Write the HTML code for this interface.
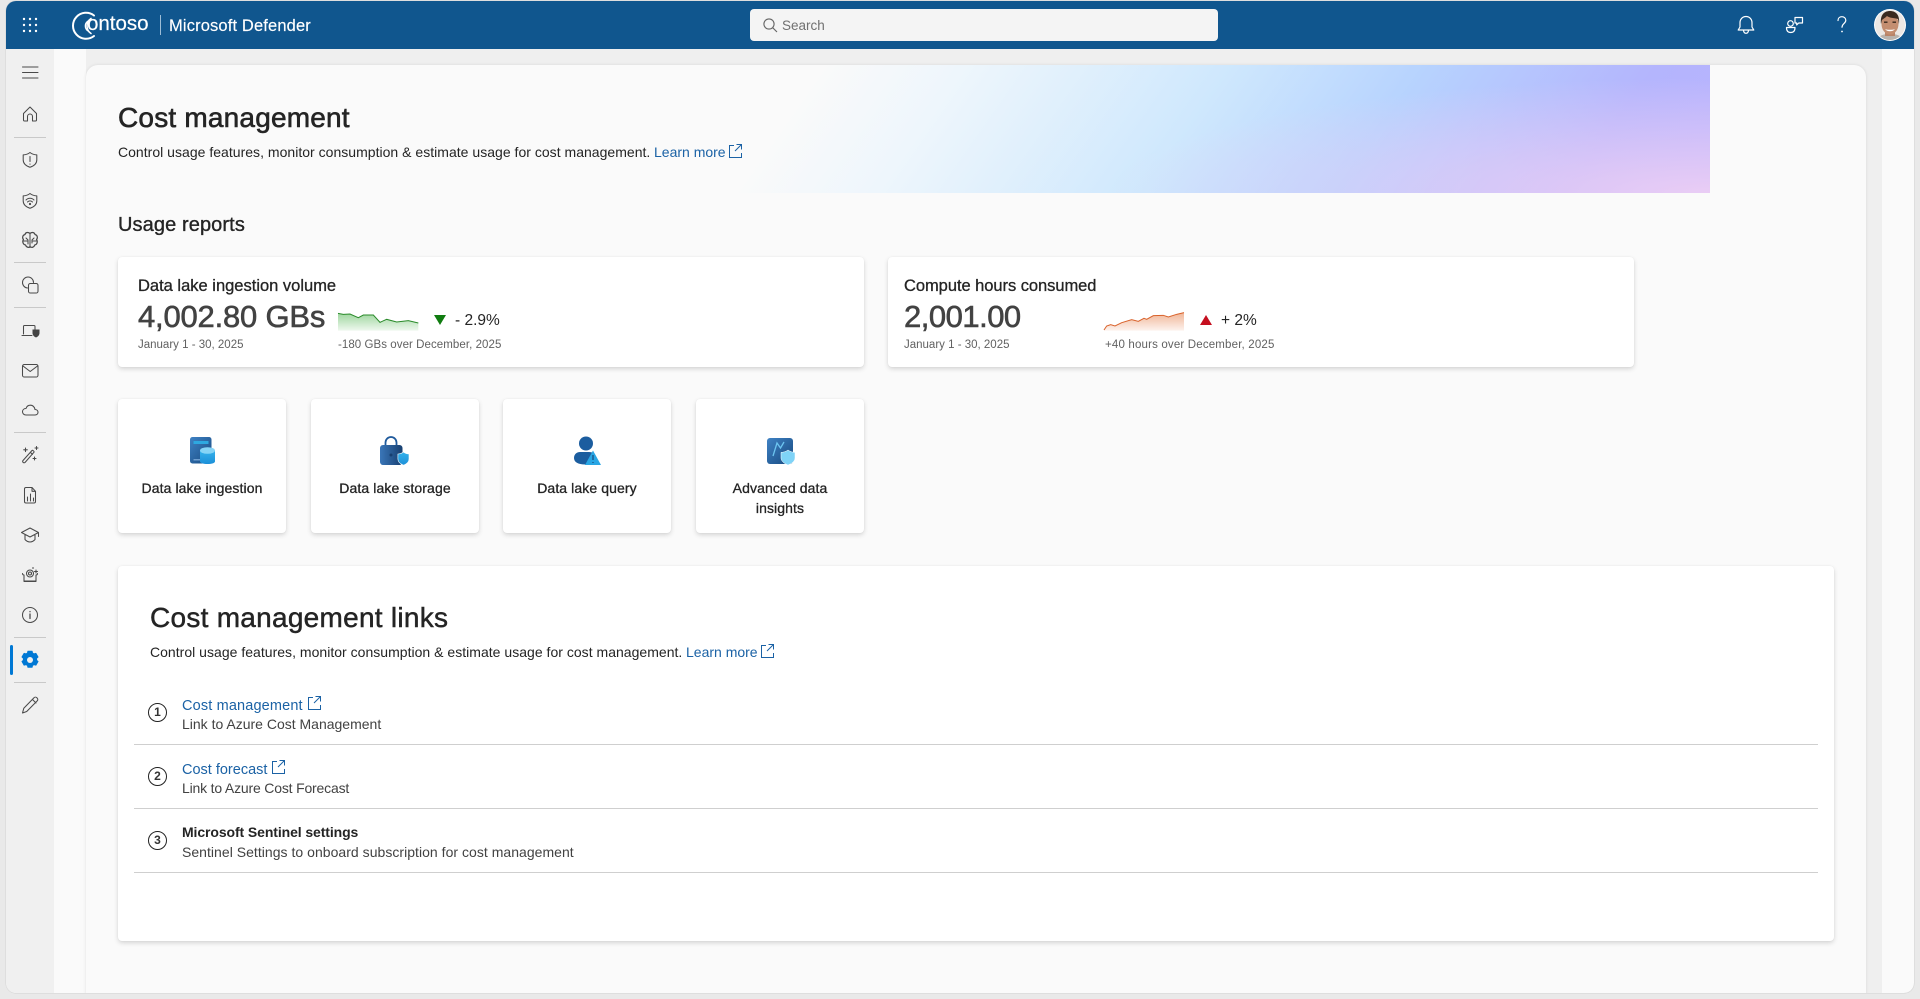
<!DOCTYPE html>
<html lang="en"><head><meta charset="utf-8"><title>Cost management</title>
<style>
html,body{margin:0;padding:0;width:1920px;height:999px;overflow:hidden;background:#e9e9e9;font-family:"Liberation Sans",Arial,sans-serif;color:#242424}
.a{position:absolute}
.t{position:absolute;white-space:nowrap;line-height:20px;font-size:14px}
.m{-webkit-text-stroke:.25px currentColor}
.card{position:absolute;background:#fff;border-radius:4px;box-shadow:0 2px 5px rgba(0,0,0,.15),0 0 1px rgba(0,0,0,.08)}
.link{color:#1b62a5}
.g{color:#616161}
.div{position:absolute;left:134px;width:1684px;height:1px;background:#cfcfcf}
.n{position:absolute;left:148px;width:17px;height:17px;border:1.6px solid #222;border-radius:50%;text-align:center;font-size:12px;line-height:17px;font-weight:bold;color:#333}
svg{position:absolute;overflow:visible}
</style></head><body>
<div class="a" style="left:6px;top:1px;width:1908px;height:992px;background:#fafafa;border-radius:10px;overflow:hidden;box-shadow:0 0 1px rgba(0,0,0,.3)">
<div class="a" style="left:0;top:48px;width:48px;height:944px;background:#f0f0f0"></div>
<div class="a" style="left:80px;top:48px;width:1796px;height:944px;background:#efefef"></div>
<div class="a" style="left:80px;top:64px;width:1780px;height:930px;background:#fafafa;border-radius:12px 12px 0 0;box-shadow:0 0 3px rgba(0,0,0,.1)"></div>
<div class="a" style="left:0;top:0;width:1908px;height:48px;background:#10568e"></div>
</div>

<!-- banner -->
<div class="a" style="left:700px;top:65px;width:1010px;height:128px;background:radial-gradient(ellipse 600px 115px at 100% 100%,rgba(236,206,244,.95) 0,rgba(226,204,250,0) 100%),linear-gradient(125deg,#fafafa 0,#fafafa 11%,#eef6fc 24%,#cfe8fd 48%,#b7d3fe 66%,#b4b5fd 87%,#b8b2fe 100%)"></div>

<!-- header -->
<svg style="left:0;top:0" width="1920" height="50" viewBox="0 0 1920 50">
<g fill="#fff"><circle cx="24" cy="19" r="1.2"/><circle cx="30" cy="19" r="1.2"/><circle cx="36" cy="19" r="1.2"/><circle cx="24" cy="25" r="1.2"/><circle cx="30" cy="25" r="1.2"/><circle cx="36" cy="25" r="1.2"/><circle cx="24" cy="31" r="1.2"/><circle cx="30" cy="31" r="1.2"/><circle cx="36" cy="31" r="1.2"/></g>
<g fill="none" stroke="#fff" stroke-linecap="round"><path d="M94 15.500A13 13 0 1 0 94 36" stroke-width="2"/><path d="M91 18.500A9 9 0 0 0 91 33.500" stroke-width="1.600"/><path d="M88 21A6 6 0 0 0 88 31" stroke-width="1.300"/></g>
<rect x="160" y="15" width="1" height="20" fill="#9dbdd6"/>
<g fill="none" stroke="#fff" stroke-width="1.200" stroke-linecap="round" stroke-linejoin="round">
<path d="M1746 16.500c3.500 0 6 2.800 6 6.200v4.300l1.800 3h-15.600l1.800-3v-4.300c0-3.400 2.500-6.200 6-6.200zM1743.500 30.500c.3 2 1.200 2.800 2.500 2.800s2.200-.8 2.500-2.800"/>
<circle cx="1790.500" cy="23.500" r="2.800"/><path d="M1786.500 27.500h8.500c0 3.800-2 5-4.300 5s-4.200-1.200-4.200-5z"/><path d="M1795 17.500h7.500v5.500h-3.800l-2 2v-2h-1.700z"/>
<path d="M1838 20.500c0-2.500 1.800-3.800 3.900-3.800s3.900 1.400 3.900 3.500c0 3.400-3.800 3.400-3.800 7"/>
</g>
<circle cx="1842" cy="31.500" r=".9" fill="#fff"/>
<circle cx="1890" cy="25" r="16" fill="#fff"/>
<clipPath id="av"><circle cx="1890" cy="25" r="15"/></clipPath>
<g clip-path="url(#av)"><rect x="1875" y="10" width="30" height="30" fill="#ece8e4"/><path d="M1877 41c1-6 7-7 13-7s12 1 13 7z" fill="#b9b3ad"/><rect x="1885" y="27" width="10" height="9" fill="#b98468"/><ellipse cx="1890" cy="24" rx="8.500" ry="10.500" fill="#c48e70"/><path d="M1881 24c-1-9 3-13 9-13s10 4 9 13l-1-5c-3-1-9-1-11-3-2 2-4 3-5 4z" fill="#3a2a1f"/><path d="M1885 29c2 3 8 3 10 0-2 1-8 1-10 0z" fill="#fff"/><rect x="1884" y="21.500" width="3.500" height="1.400" fill="#3a2a1f"/><rect x="1892.500" y="21.500" width="3.500" height="1.400" fill="#3a2a1f"/></g>
</svg>
<div class="t" style="left:87px;top:12px;font-size:20.5px;line-height:24px;color:#fff;-webkit-text-stroke:.2px #fff">ontoso</div>
<div class="t m" style="left:169px;top:16px;font-size:16.5px;letter-spacing:.14px;color:#fff;-webkit-text-stroke:.15px #fff">Microsoft Defender</div>
<div class="a" style="left:750px;top:9px;width:468px;height:32px;background:#f4f4f4;border-radius:4px"></div>
<svg style="left:762px;top:17px" width="16" height="16" viewBox="0 0 16 16"><circle cx="7" cy="7" r="5.100" fill="none" stroke="#666" stroke-width="1.100"/><path d="M10.800 10.800L15 15" stroke="#666" stroke-width="1.100"/></svg>
<div class="t" style="left:782px;top:16px;font-size:13.5px;color:#707070">Search</div>

<!-- rail -->
<svg style="left:0;top:0" width="60" height="999" viewBox="0 0 60 999">
<g fill="#c9c9c9"><rect x="14" y="137" width="32" height="1"/><rect x="14" y="262" width="32" height="1"/><rect x="14" y="307" width="32" height="1"/><rect x="14" y="432" width="32" height="1"/><rect x="14" y="637" width="32" height="1"/><rect x="14" y="682" width="32" height="1"/></g>
<g fill="none" stroke="#4a4a4a" stroke-width="1.050" stroke-linecap="round" stroke-linejoin="round">
<path d="M22.500 67h15.500M22.500 72.500h15.500M22.500 78h15.500"/>
<path d="M23.500 113.500l6.500-6.500 6.500 6.500v6.500a1 1 0 0 1-1 1h-3v-4.500a2.500 2.500 0 0 0-5 0v4.500h-3a1 1 0 0 1-1-1z"/>
<path d="M30 152.500c2 1.600 4.400 2.300 6.800 2.400v5c0 3.500-2.600 6-6.800 7.400-4.200-1.400-6.800-3.900-6.800-7.400v-5c2.400-.1 4.800-.8 6.800-2.400z"/><path d="M30 156.500v5M30 164v.2"/>
<path d="M30 193.500c2 1.600 4.400 2.300 6.800 2.400v5c0 3.500-2.600 6-6.800 7.400-4.200-1.400-6.800-3.900-6.800-7.400v-5c2.400-.1 4.800-.8 6.800-2.400z"/><path d="M26 200a5.500 5.500 0 0 1 8 0M27.500 202a3.300 3.300 0 0 1 5 0"/><circle cx="30" cy="204" r=".6"/>
<path d="M30 233.500c-1.500-1.500-4.500-1.500-5 1-2.500.5-3 3.500-1.500 5-1.500 2-.5 5 2 5.500 1 2.500 3.500 3 4.500 1.500 1.500 1.500 4 1 4.700-1.500 2.500-.5 3.300-3.500 1.800-5.500 1.500-1.500 1-4.500-1.500-5-.7-2.500-3.500-2.500-5-1z" stroke-width="1.200"/><path d="M30 233.500v14M26 238l2 2v4M34 238l-2 2v3M24 241h4M36 241h-4"/>
<path d="M33.500 282.500a5.500 5.500 0 1 0-6 5.500"/><rect x="28.500" y="283.500" width="9.500" height="9.500" rx="1.800"/>
<path d="M35 332v-5.500a1 1 0 0 0-1-1H24.500a1 1 0 0 0-1 1v7.500M22 335.500h10"/>
<rect x="22.500" y="364.500" width="15.500" height="12.500" rx="1.800"/><path d="M23 366l7.200 5.500 7.300-5.500"/>
<path d="M26 415h9c2 0 3-1.300 3-2.700 0-1.600-1.300-2.800-3-2.800-.4-2.800-2.500-4.300-4.500-4.300-2.300 0-3.900 1.400-4.500 3.300-2.400 0-3.500 1.700-3.500 3.300 0 1.500 1.300 3.200 3.500 3.200z"/>
<path d="M23 460.500l9-10c.6-.6 2.500 1 2 1.700l-9 10.300c-.6.500-1.600.3-2-.2s-.4-1.300 0-1.800zM30.500 452.500l2 1.800"/><path d="M25.500 448v3.600M23.700 449.800h3.600M36.500 446.500v3M35 448h3M34.500 457v3M33 458.500h3"/>
<path d="M24.500 489a1.500 1.500 0 0 1 1.500-1.500h6l3.500 3.800V501.500a1.500 1.500 0 0 1-1.500 1.500h-8a1.500 1.500 0 0 1-1.500-1.500zM32 487.500v3.800h3.500M27.500 501v-4M30.500 501v-7M33.500 501v-3"/>
<path d="M21.500 532.500l8.500-4.500 8.500 4.500-8.500 4.500zM25 535v4.500c1.500 1.700 3 2.500 5 2.500s3.500-.8 5-2.500V535M38.500 532.500v4"/>
<path d="M22.500 573.500c0 1 .8 1.500 1.500 1.500v6h12v-6c.7 0 1.500-.5 1.500-1.500M24 581.500h12M36 570v3M34.500 571.500h3"/><circle cx="30" cy="573.500" r="3.500"/><circle cx="30" cy="573.500" r="1.500"/><circle cx="33" cy="568" r=".3"/>
<circle cx="30" cy="615" r="7.500"/><path d="M30 614v4.500M30 611.500v.2" stroke-width="1.300"/>
<path d="M22.500 713l1.300-4.800 10.200-10.500c.8-.8 2-.8 2.800 0l.4.400c.8.800.8 2 0 2.800L26.700 711.500zM32.500 699.500l3.500 3.500"/>
</g>
<path d="M32.500 329.500h7v3.500c0 2-1.500 3.700-3.500 4.500-2-.8-3.500-2.500-3.500-4.500z" fill="#444"/>
<rect x="10" y="645" width="3" height="30" rx="1.500" fill="#0078d4"/>
<path d="M27.500 653l.4-1.800h4.200l.4 1.800 1.600.9 1.800-.5 2.100 3.600-1.400 1.300v1.900l1.400 1.300-2.100 3.600-1.800-.5-1.600.9-.4 1.800h-4.200l-.4-1.800-1.600-.9-1.800.5-2.100-3.600 1.400-1.300v-1.900l-1.400-1.300 2.100-3.600 1.800.5z" fill="#0078d4" stroke="#0078d4" stroke-width="1" stroke-linejoin="round"/><circle cx="30" cy="660" r="3" fill="#f0f0f0"/>
</svg>

<!-- page head -->
<div class="t m" style="left:118px;top:101px;font-size:28px;line-height:34px;letter-spacing:.2px;-webkit-text-stroke:.6px #242424">Cost management</div>
<div class="t" style="left:118px;top:142px;letter-spacing:.02px">Control usage features, monitor consumption &amp; estimate usage for cost management.</div>
<div class="t link" style="left:654px;top:142px">Learn more</div>
<svg style="left:729px;top:144px" width="13" height="14" viewBox="0 0 13 14" fill="none" stroke="#1b62a5" stroke-width="1"><path d="M5 1.500H.5v12h12V9M7.500.5h5v5M12.500.5L6 7"/></svg>
<div class="t m" style="left:118px;top:213px;font-size:20px;line-height:24px;letter-spacing:.1px;-webkit-text-stroke:.35px #242424">Usage reports</div>

<!-- KPI cards -->
<div class="card" style="left:118px;top:257px;width:746px;height:110px"></div>
<div class="card" style="left:888px;top:257px;width:746px;height:110px"></div>
<div class="t m" style="left:138px;top:276px;font-size:16.5px;-webkit-text-stroke:.3px #242424">Data lake ingestion volume</div>
<div class="t m" style="left:138px;top:299px;font-size:31px;line-height:36px;letter-spacing:-.2px;color:#424242;-webkit-text-stroke:.6px #424242">4,002.80 GBs</div>
<div class="t g" style="left:138px;top:337px;font-size:11.5px;line-height:16px">January 1 - 30, 2025</div>
<div class="t" style="left:455px;top:311px;font-size:15.5px">- 2.9%</div>
<div class="t g" style="left:338px;top:337px;font-size:11.5px;line-height:16px;letter-spacing:.06px">-180 GBs over December, 2025</div>
<svg style="left:110px;top:250px" width="420" height="130" viewBox="0 0 1260 390">
<defs><linearGradient id="gf" x1="0" y1="0" x2="0" y2="1"><stop offset="0" stop-color="#9ed69e"/><stop offset="1" stop-color="#eef8ee"/></linearGradient>
<linearGradient id="of" x1="0" y1="0" x2="0" y2="1"><stop offset="0" stop-color="#f0b596"/><stop offset="1" stop-color="#fdf3ee"/></linearGradient></defs>
<path d="M684 190L700 193 720 192 745 203 760 195 790 195 810 217 830 208 860 216 895 212 925 219V242H684Z" fill="url(#gf)"/>
<path d="M684 190L700 193 720 192 745 203 760 195 790 195 810 217 830 208 860 216 895 212 925 219" fill="none" stroke="#2a8a2a" stroke-width="3"/>
<path d="M972 195H1008L990 225Z" fill="#107c10"/>
</svg>
<div class="t m" style="left:904px;top:276px;font-size:16.5px;letter-spacing:-.05px;-webkit-text-stroke:.3px #242424">Compute hours consumed</div>
<div class="t m" style="left:904px;top:299px;font-size:31px;line-height:36px;letter-spacing:-.5px;color:#424242;-webkit-text-stroke:.6px #424242">2,001.00</div>
<div class="t g" style="left:904px;top:337px;font-size:11.5px;line-height:16px">January 1 - 30, 2025</div>
<div class="t" style="left:1221px;top:311px;font-size:15.5px">+ 2%</div>
<div class="t g" style="left:1105px;top:337px;font-size:11.5px;line-height:16px;letter-spacing:.17px">+40 hours over December, 2025</div>
<svg style="left:880px;top:250px" width="420" height="130" viewBox="0 0 1260 390">
<path d="M672 240L680 228 692 224 705 228 725 218 755 209 775 214 792 205 800 208 820 197 850 196 865 201 890 193 912 188V242H672Z" fill="url(#of)"/>
<path d="M672 240L680 228 692 224 705 228 725 218 755 209 775 214 792 205 800 208 820 197 850 196 865 201 890 193 912 188" fill="none" stroke="#d9622b" stroke-width="3"/>
<path d="M960 225H996L978 195Z" fill="#c50f1f"/>
</svg>

<!-- tiles -->
<div class="card" style="left:118px;top:399px;width:168px;height:134px"></div>
<div class="card" style="left:311px;top:399px;width:168px;height:134px"></div>
<div class="card" style="left:503px;top:399px;width:168px;height:134px"></div>
<div class="card" style="left:696px;top:399px;width:168px;height:134px"></div>
<svg style="left:0;top:0" width="900" height="540" viewBox="0 0 900 540">
<defs>
<linearGradient id="b1" x1="0" y1="0" x2="1" y2="1"><stop offset="0" stop-color="#3f82c4"/><stop offset="1" stop-color="#17497f"/></linearGradient>
<linearGradient id="b2" x1="0" y1="0" x2="0" y2="1"><stop offset="0" stop-color="#35b2ec"/><stop offset="1" stop-color="#1c8fd8"/></linearGradient>
<linearGradient id="b3" x1="0" y1="0" x2="1" y2="0"><stop offset="0" stop-color="#3a76b8"/><stop offset="1" stop-color="#173f70"/></linearGradient>
</defs>
<rect x="190" y="437" width="21.500" height="26.500" rx="2.500" fill="url(#b1)"/>
<rect x="193.500" y="441" width="15" height="3" fill="#2ea8e0"/><rect x="193.500" y="459" width="9" height="1.500" fill="#6f9fd0"/>
<path d="M200 450.500v11c0 1.500 3.400 2.500 7.500 2.500s7.500-1 7.500-2.500v-11z" fill="url(#b2)"/><ellipse cx="207.500" cy="450.500" rx="7.500" ry="3.300" fill="#86d4f6"/>
<path d="M385.500 446v-3.500a5.500 5.500 0 0 1 11 0v3.500" fill="none" stroke="#1f5a9c" stroke-width="1.800"/>
<rect x="380" y="445" width="22.500" height="20" rx="3" fill="url(#b3)"/><circle cx="391" cy="455" r="1.500" fill="#173f70"/>
<path d="M403.500 452c1.700 1.300 3.600 1.900 5.500 2v5c0 3-2.500 5-5.500 6.200-3-1.200-5.600-3.200-5.600-6.200v-5c2-.1 3.900-.7 5.600-2z" fill="url(#b2)" stroke="#fff" stroke-width=".6"/>
<circle cx="586" cy="443.500" r="7" fill="#1b5d9f"/><path d="M574 458c0-4 3-6 6-6h9c4 0 7 2 7 6s-4 6.500-11 6.500-11-2.500-11-6.500z" fill="#1b5d9f"/>
<path d="M593 450.500l8 14.500h-16z" fill="#29a6e4"/><path d="M593 455v5M593 462v1" stroke="#174a7c" stroke-width="1.200"/>
<rect x="767" y="438" width="26" height="26" rx="3" fill="url(#b1)"/><path d="M773 456l4-13 3.500 5 3.500-6" fill="none" stroke="#6cc4f0" stroke-width="1.300"/>
<path d="M788 450c2 1.600 4.600 2.300 7 2.400v5.600c0 3-3 5.500-7 7-4-1.500-7-4-7-7v-5.600c2.400-.1 5-.8 7-2.400z" fill="#7fd3f7" stroke="#fff" stroke-width=".5"/>
</svg>
<div class="t m" style="left:118px;top:478px;width:168px;text-align:center;font-size:14px;letter-spacing:.1px;-webkit-text-stroke:.3px #242424">Data lake ingestion</div>
<div class="t m" style="left:311px;top:478px;width:168px;text-align:center;font-size:14px;letter-spacing:.1px;-webkit-text-stroke:.3px #242424">Data lake storage</div>
<div class="t m" style="left:503px;top:478px;width:168px;text-align:center;font-size:14px;letter-spacing:.1px;-webkit-text-stroke:.3px #242424">Data lake query</div>
<div class="t m" style="left:696px;top:478px;width:168px;text-align:center;font-size:14px;letter-spacing:.1px;-webkit-text-stroke:.3px #242424">Advanced data<br>insights</div>

<!-- links section -->
<div class="card" style="left:118px;top:566px;width:1716px;height:375px"></div>
<div class="t m" style="left:150px;top:601px;font-size:28px;line-height:34px;letter-spacing:.27px;-webkit-text-stroke:.45px #242424">Cost management links</div>
<div class="t" style="left:150px;top:642px;letter-spacing:.02px">Control usage features, monitor consumption &amp; estimate usage for cost management.</div>
<div class="t link" style="left:686px;top:642px">Learn more</div>
<svg style="left:761px;top:644px" width="13" height="14" viewBox="0 0 13 14" fill="none" stroke="#1b62a5" stroke-width="1"><path d="M5 1.500H.5v12h12V9M7.500.5h5v5M12.500.5L6 7"/></svg>

<div class="n" style="top:703px">1</div>
<div class="t link" style="left:182px;top:696px;font-size:14.5px;letter-spacing:.15px">Cost management</div>
<svg style="left:308px;top:696px" width="13" height="14" viewBox="0 0 13 14" fill="none" stroke="#1b62a5" stroke-width="1"><path d="M5 1.500H.5v12h12V9M7.500.5h5v5M12.500.5L6 7"/></svg>
<div class="t" style="left:182px;top:714px;color:#424242">Link to Azure Cost Management</div>
<div class="div" style="top:744px"></div>

<div class="n" style="top:767px">2</div>
<div class="t link" style="left:182px;top:760px;font-size:14.5px">Cost forecast</div>
<svg style="left:272px;top:760px" width="13" height="14" viewBox="0 0 13 14" fill="none" stroke="#1b62a5" stroke-width="1"><path d="M5 1.500H.5v12h12V9M7.500.5h5v5M12.500.5L6 7"/></svg>
<div class="t" style="left:182px;top:778px;color:#424242;letter-spacing:-.18px">Link to Azure Cost Forecast</div>
<div class="div" style="top:808px"></div>

<div class="n" style="top:831px">3</div>
<div class="t" style="left:182px;top:822px;font-weight:bold;letter-spacing:-.1px">Microsoft Sentinel settings</div>
<div class="t" style="left:182px;top:842px;color:#424242;letter-spacing:.03px">Sentinel Settings to onboard subscription for cost management</div>
<div class="div" style="top:872px"></div>
</body></html>
